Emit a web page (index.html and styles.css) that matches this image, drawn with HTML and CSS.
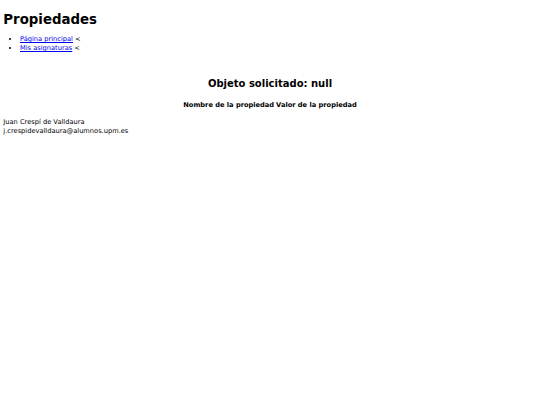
FILE: index.html
```html
<!DOCTYPE html>
<html lang="es">
<head>
<meta charset="utf-8">
<title>Propiedades</title>
<link rel="stylesheet" href="styles.css">
</head>
<body>
<h1 class="title">Propiedades</h1>
<ul class="nav">
<li><a href="#">Página principal</a> &lt;</li>
<li><a href="#">Mis asignaturas</a> &lt;</li>
</ul>
<h2 class="object">Objeto solicitado: null</h2>
<table class="props">
<tr><th>Nombre de la propiedad</th><th>Valor de la propiedad</th></tr>
</table>
<div class="footer">
<div>Juan Crespí de Valldaura</div>
<div>j.crespidevalldaura@alumnos.upm.es</div>
</div>
</body>
</html>
```
FILE: styles.css
```css
html { background: #fff; }
body {
  margin: 3.33px;
  font-family: "DejaVu Sans", Verdana, sans-serif;
  font-size: 6.67px;
  line-height: 9px;
  color: #000;
}
.title {
  font-size: 13.33px;
  line-height: 15.5px;
  font-weight: bold;
  margin: 8.93px 0 6.7px;
}
.nav {
  margin: 7.7px 0 0;
  padding-left: 16.67px;
}
.nav li { line-height: 9px; }
.nav a { color: #0000ee; }
.object {
  text-align: center;
  font-size: 10px;
  line-height: 13.5px;
  font-weight: bold;
  margin: 23.7px 0 0;
}
.props {
  margin: 10.3px auto 0;
  border-spacing: 0.83px;
}
.props th {
  font-weight: bold;
  padding: 0.42px 1px;
}
.footer { margin-top: 7.5px; }
```
